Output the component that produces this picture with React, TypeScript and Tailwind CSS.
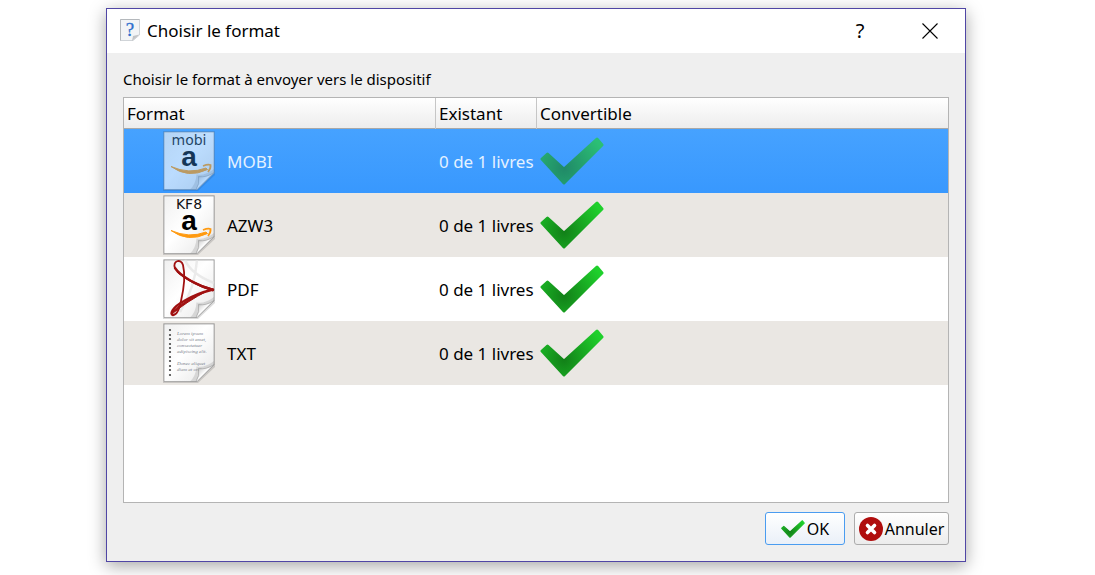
import { useState, type ReactNode } from "react"
import clsx from "clsx"

const formats = [
  { name: "MOBI", count: "0 de 1 livres" },
  { name: "AZW3", count: "0 de 1 livres" },
  { name: "PDF", count: "0 de 1 livres" },
  { name: "TXT", count: "0 de 1 livres" },
]

// Sheet of paper with a curled bottom right corner
function Page({ id, children }: { id: string; children?: ReactNode }) {
  return (
    <svg viewBox="0 0 60 64" className="h-16 w-15 shrink-0" aria-hidden="true">
      <defs>
        <linearGradient id={`${id}-paper`} x1="0" y1="0" x2="1" y2="1">
          <stop offset="0" stopColor="#f0f0f0" />
          <stop offset="0.45" stopColor="#ffffff" />
          <stop offset="1" stopColor="#e6e6e6" />
        </linearGradient>
        <linearGradient id={`${id}-curl`} gradientUnits="userSpaceOnUse" x1="37" y1="46" x2="46" y2="55">
          <stop offset="0" stopColor="#a0a0a0" />
          <stop offset="0.4" stopColor="#e2e2e2" />
          <stop offset="0.75" stopColor="#ffffff" />
          <stop offset="1" stopColor="#c8c8c8" />
        </linearGradient>
      </defs>
      <path d="M3 2H55V46L38 62H3Z" fill="#000" opacity="0.14" />
      <path d="M4 3H54V44L37 60.5H4Z" fill={`url(#${id}-paper)`} stroke="#8a8a8a" strokeOpacity="0.6" />
      {children}
      <path d="M30 60.5Q36 55 36.5 45.5Q45 47 54 40V44L37 60.5Z" fill="#888" opacity="0.25" />
      <path d="M36 60.5Q40 55 38.5 47.5Q46 49 54 43.5L37 60.5Z" fill={`url(#${id}-curl)`} stroke="#999" strokeWidth="0.6" />
    </svg>
  )
}

function AmazonPage({ id, label }: { id: string; label: string }) {
  return (
    <Page id={id}>
      <text x="29" y="16" textAnchor="middle" fontSize="14" fontFamily="DejaVu Sans, sans-serif" fill="#111">
        {label}
      </text>
      <text
        x="29"
        y="37"
        textAnchor="middle"
        fontSize="28"
        fontWeight="700"
        fontFamily="Liberation Sans, sans-serif"
        fill="#000"
      >
        a
      </text>
      <path d="M11 37.5Q29 45.5 46 39L47.5 40.5Q28 50 11 37.5Z" fill="#ff9a10" stroke="#ff9a10" strokeLinejoin="round" />
      <path d="M43 37Q48 35 50.5 36Q51 39.5 48 43" fill="none" stroke="#ff9a10" strokeWidth="1.8" />
    </Page>
  )
}

function PdfPage() {
  return (
    <Page id="pdf">
      <path d="M25 3Q31 17 54 26M37 3Q35 31 20 55" fill="none" stroke="#e2e2e2" strokeWidth="2.5" opacity="0.7" />
      <g fill="none" stroke="#a01010" strokeLinecap="round">
        <path d="M53 33C38 29 20 19 15 11" strokeWidth="2.4" />
        <path d="M15 11C12 4 21 1 23 8C25 16 24 31 21 44C19 54 16 58 13 58" strokeWidth="1.8" />
        <path d="M13 58C9 57 13 50 24 44C34 38 43 35 53 32.5" strokeWidth="2.4" />
      </g>
      <path d="M17 15Q32 26 53 32V34Q32 28 17 15ZM13 54Q26 42 48 33.5Q26 45 12 57Z" fill="#a01010" stroke="#a01010" />
    </Page>
  )
}

function TxtPage() {
  const lines = ["Lorem ipsum", "dolor sit amet,", "consectetuer", "adipiscing elit.", "", "Donec aliquet", "diam at orci"]
  return (
    <Page id="txt">
      {[9, 14, 18, 23, 27, 31, 36, 40, 45, 49, 54].map((y) => (
        <circle key={y} cx="10" cy={y} r="1.1" fill="#444" />
      ))}
      {lines.map((line, i) => (
        <text
          key={i}
          x="17"
          y={14 + i * 6}
          fontSize="5"
          fontStyle="italic"
          fontFamily="Liberation Serif, serif"
          fill="#7c828e"
        >
          {line}
        </text>
      ))}
    </Page>
  )
}

function FormatIcon({ name }: { name: string }) {
  if (name === "MOBI") return <AmazonPage id="mobi" label="mobi" />
  if (name === "AZW3") return <AmazonPage id="azw3" label="KF8" />
  if (name === "PDF") return <PdfPage />
  return <TxtPage />
}

function Check({ id, className }: { id: string; className?: string }) {
  return (
    <svg viewBox="0 0 64 64" className={className} aria-hidden="true">
      <defs>
        <radialGradient id={id} gradientUnits="userSpaceOnUse" cx="24" cy="39" r="42">
          <stop offset="0" stopColor="#128018" />
          <stop offset="1" stopColor="#1fd02c" />
        </radialGradient>
      </defs>
      <path
        d="M2 30L7.5 25L24 40L57 10L62 16L24 54Z"
        fill={`url(#${id})`}
        stroke={`url(#${id})`}
        strokeWidth="3"
        strokeLinejoin="round"
      />
    </svg>
  )
}

function TitleIcon() {
  return (
    <svg viewBox="0 0 20 24" className="h-6 w-5" aria-hidden="true">
      <path d="M0.5 0.5H19.5V16L13 21.5H0.5Z" fill="#f2f4f6" stroke="#d0d4d8" />
      <path d="M0.5 21.5V0.5H19.5" fill="none" stroke="#b4b8bc" />
      <path d="M19.5 15.5L12 22L13 17Z" fill="#c2c4c6" />
      <text x="10" y="17" textAnchor="middle" fontSize="19" fontFamily="Liberation Serif, serif" fill="#2e6fce" stroke="#2e6fce" strokeWidth="0.3">
        ?
      </text>
    </svg>
  )
}

export default function App() {
  const [selected, setSelected] = useState("MOBI")

  return (
    <div className="flex min-h-screen bg-white pt-2 pr-[129px] pb-[13px] pl-[106px] font-['Noto_Sans',sans-serif] text-black">
      <main className="flex flex-1 flex-col border border-[#5046a5] bg-[#efefef] shadow-[0_4px_16px_rgba(0,0,0,0.35)]">
        {/* Title bar */}
        <header className="flex h-11 items-center bg-white pl-[13px]">
          <TitleIcon />
          <h1 className="ml-[7px] flex-1 text-[17px]">Choisir le format</h1>
          <button type="button" aria-label="Aide" className="flex h-full w-[70px] items-center justify-center text-[20px]">
            ?
          </button>
          <button type="button" aria-label="Fermer" className="flex h-full w-[70px] items-center justify-center">
            <svg viewBox="0 0 16 16" className="size-4" stroke="#000" strokeWidth="1.1" aria-hidden="true">
              <path d="M0.5 0.5L15.5 15.5M15.5 0.5L0.5 15.5" />
            </svg>
          </button>
        </header>

        <div className="flex flex-1 flex-col px-4 pt-3 pb-4">
          <p className="text-[15px] leading-7">Choisir le format à envoyer vers le dispositif</p>

          {/* Format list */}
          <div className="mt-1 flex-1 border border-[#b4b4b4] bg-white">
            <table className="w-full table-fixed border-separate border-spacing-0 text-left text-[17px]">
              <colgroup>
                <col className="w-[312px]" />
                <col className="w-[101px]" />
                <col />
              </colgroup>
              <thead>
                <tr className="h-[31px] bg-linear-to-b from-white to-[#ececec] shadow-[inset_0_-1px_0_#a8a8a8]">
                  <th className="border-r border-[#c6c6c6] p-0 pl-[3px] font-normal">Format</th>
                  <th className="border-r border-[#c6c6c6] p-0 pl-[3px] font-normal">Existant</th>
                  <th className="p-0 pl-[3px] font-normal">Convertible</th>
                </tr>
              </thead>
              <tbody>
                {formats.map((format) => {
                  const active = format.name === selected
                  return (
                    <tr
                      key={format.name}
                      onClick={() => setSelected(format.name)}
                      className={clsx(
                        "h-16",
                        active ? "bg-linear-to-b from-[#46a2ff] to-[#3898fe] text-[#e4f1ff]" : "odd:bg-white even:bg-[#eae7e3]",
                      )}
                    >
                      <td className="p-0 pl-9">
                        <div className="flex items-center gap-[7px]">
                          <span className={clsx(active && "opacity-65")}>
                            <FormatIcon name={format.name} />
                          </span>
                          <span className="pt-0.5">{format.name}</span>
                        </div>
                      </td>
                      <td className="p-0 pt-0.5 pl-[3px] whitespace-nowrap">{format.count}</td>
                      <td className="p-0 pl-[3px]">
                        <Check id={`check-${format.name}`} className={clsx("size-16", active && "opacity-65")} />
                      </td>
                    </tr>
                  )
                })}
              </tbody>
            </table>
          </div>

          {/* Actions */}
          <div className="mt-[9px] flex justify-end gap-[9px] text-[16px]">
            <button
              type="button"
              className="flex h-[33px] w-20 items-center justify-center gap-0.5 rounded-[3px] border border-[#4a9cf0] bg-linear-to-b from-white to-[#eaf0f8]"
            >
              <Check id="check-ok" className="size-6" />
              OK
            </button>
            <button
              type="button"
              className="flex h-[33px] w-[95px] items-center justify-center gap-0.5 rounded-[3px] border border-[#acacac] bg-linear-to-b from-white to-[#ececec]"
            >
              <svg viewBox="0 0 24 24" className="size-6" aria-hidden="true">
                <circle cx="12" cy="12" r="12" fill="#b00d0d" />
                <path d="M8.5 8.5L15.5 15.5M15.5 8.5L8.5 15.5" stroke="#fff" strokeWidth="3.6" strokeLinecap="round" />
              </svg>
              Annuler
            </button>
          </div>
        </div>
      </main>
    </div>
  )
}
